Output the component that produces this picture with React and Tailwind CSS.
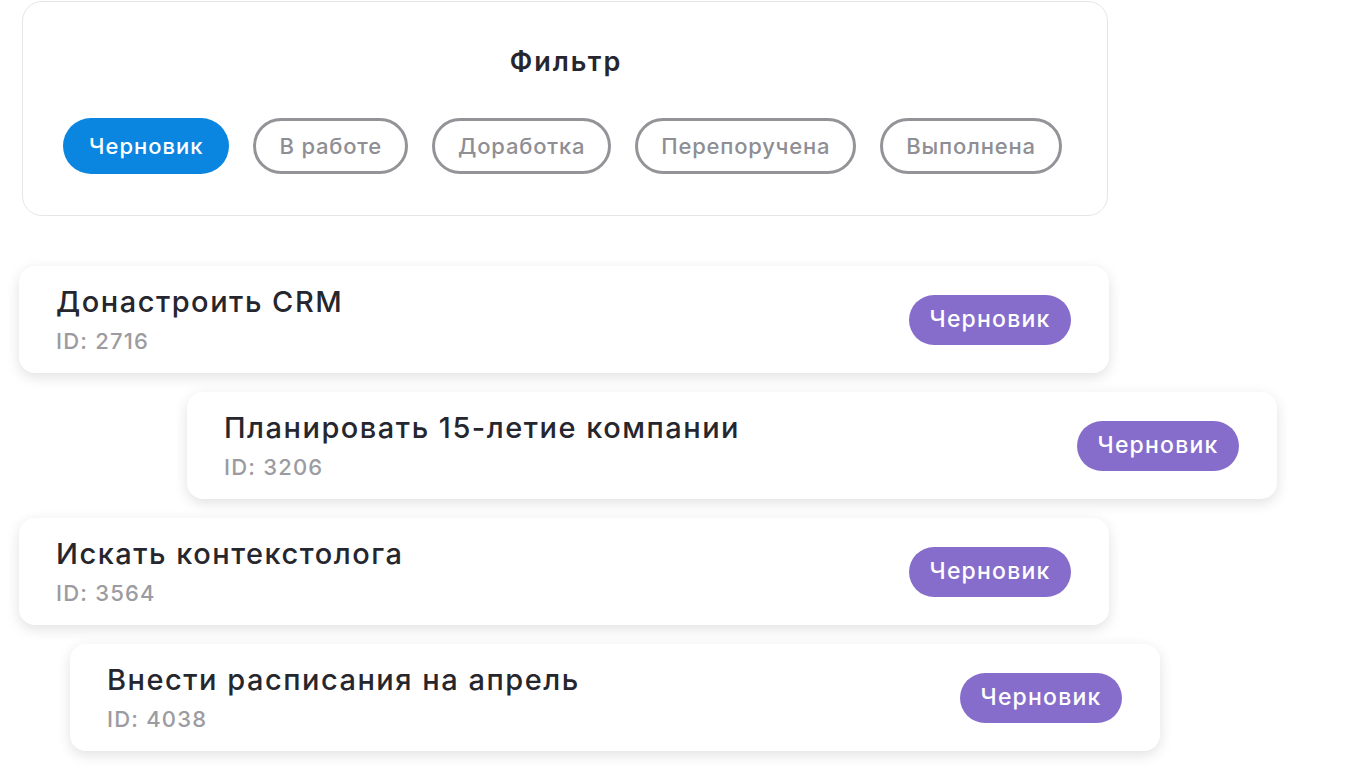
import React from "react";

const filters = ["В работе", "Доработка", "Перепоручена", "Выполнена"];

const tasks = [
  { title: "Донастроить CRM", id: "2716", ml: "ml-[19px]" },
  { title: "Планировать 15-летие компании", id: "3206", ml: "ml-[187px]" },
  { title: "Искать контекстолога", id: "3564", ml: "ml-[19px]" },
  { title: "Внести расписания на апрель", id: "4038", ml: "ml-[70px]" },
];

export default function App() {
  return (
    <div
      className="w-[1356px] h-[770px] bg-white overflow-hidden"
      style={{ fontFamily: "Inter, 'Noto Sans', sans-serif" }}
    >
      <div className="ml-[22px] mt-px w-[1086px] h-[215px] rounded-[20px] border border-[#e6e6e8] bg-white flex flex-col items-center">
        <div className="mt-[44px] text-[27px] leading-[32px] font-semibold text-[#26262e] tracking-[2px] pl-[2px]">
          Фильтр
        </div>
        <div className="mt-[40px] w-full pl-[40px] flex gap-[24px]">
          <div className="h-[56px] px-[26px] rounded-full bg-[#0a86e0] text-white text-[22px] tracking-[1px] font-medium flex items-center">
            Черновик
          </div>
          {filters.map((f) => (
            <div
              key={f}
              className="h-[56px] px-[23px] rounded-full border-[3px] border-[#939398] text-[#8e8e94] text-[22px] tracking-[0.8px] font-medium flex items-center"
            >
              {f}
            </div>
          ))}
        </div>
      </div>

      <div className="mt-[50px] flex flex-col gap-[19px]">
        {tasks.map((t) => (
          <div
            key={t.id}
            className={`${t.ml} w-[1090px] h-[107px] rounded-[16px] bg-white shadow-[0_4px_14px_rgba(0,0,0,0.12)] pl-[37px] pr-[38px] flex items-center justify-between`}
          >
            <div className="flex flex-col">
              <div className="text-[29px] leading-[36px] font-medium tracking-[1.5px] text-[#26262e]">
                {t.title}
              </div>
              <div className="mt-[7px] text-[22px] leading-[28px] font-medium tracking-[1.2px] text-[#9b9ba1]">
                ID: {t.id}
              </div>
            </div>
            <div className="h-[50px] w-[162px] rounded-full bg-[#866dcc] text-white text-[23px] tracking-[1.2px] font-medium flex items-center justify-center">
              Черновик
            </div>
          </div>
        ))}
      </div>
    </div>
  );
}
